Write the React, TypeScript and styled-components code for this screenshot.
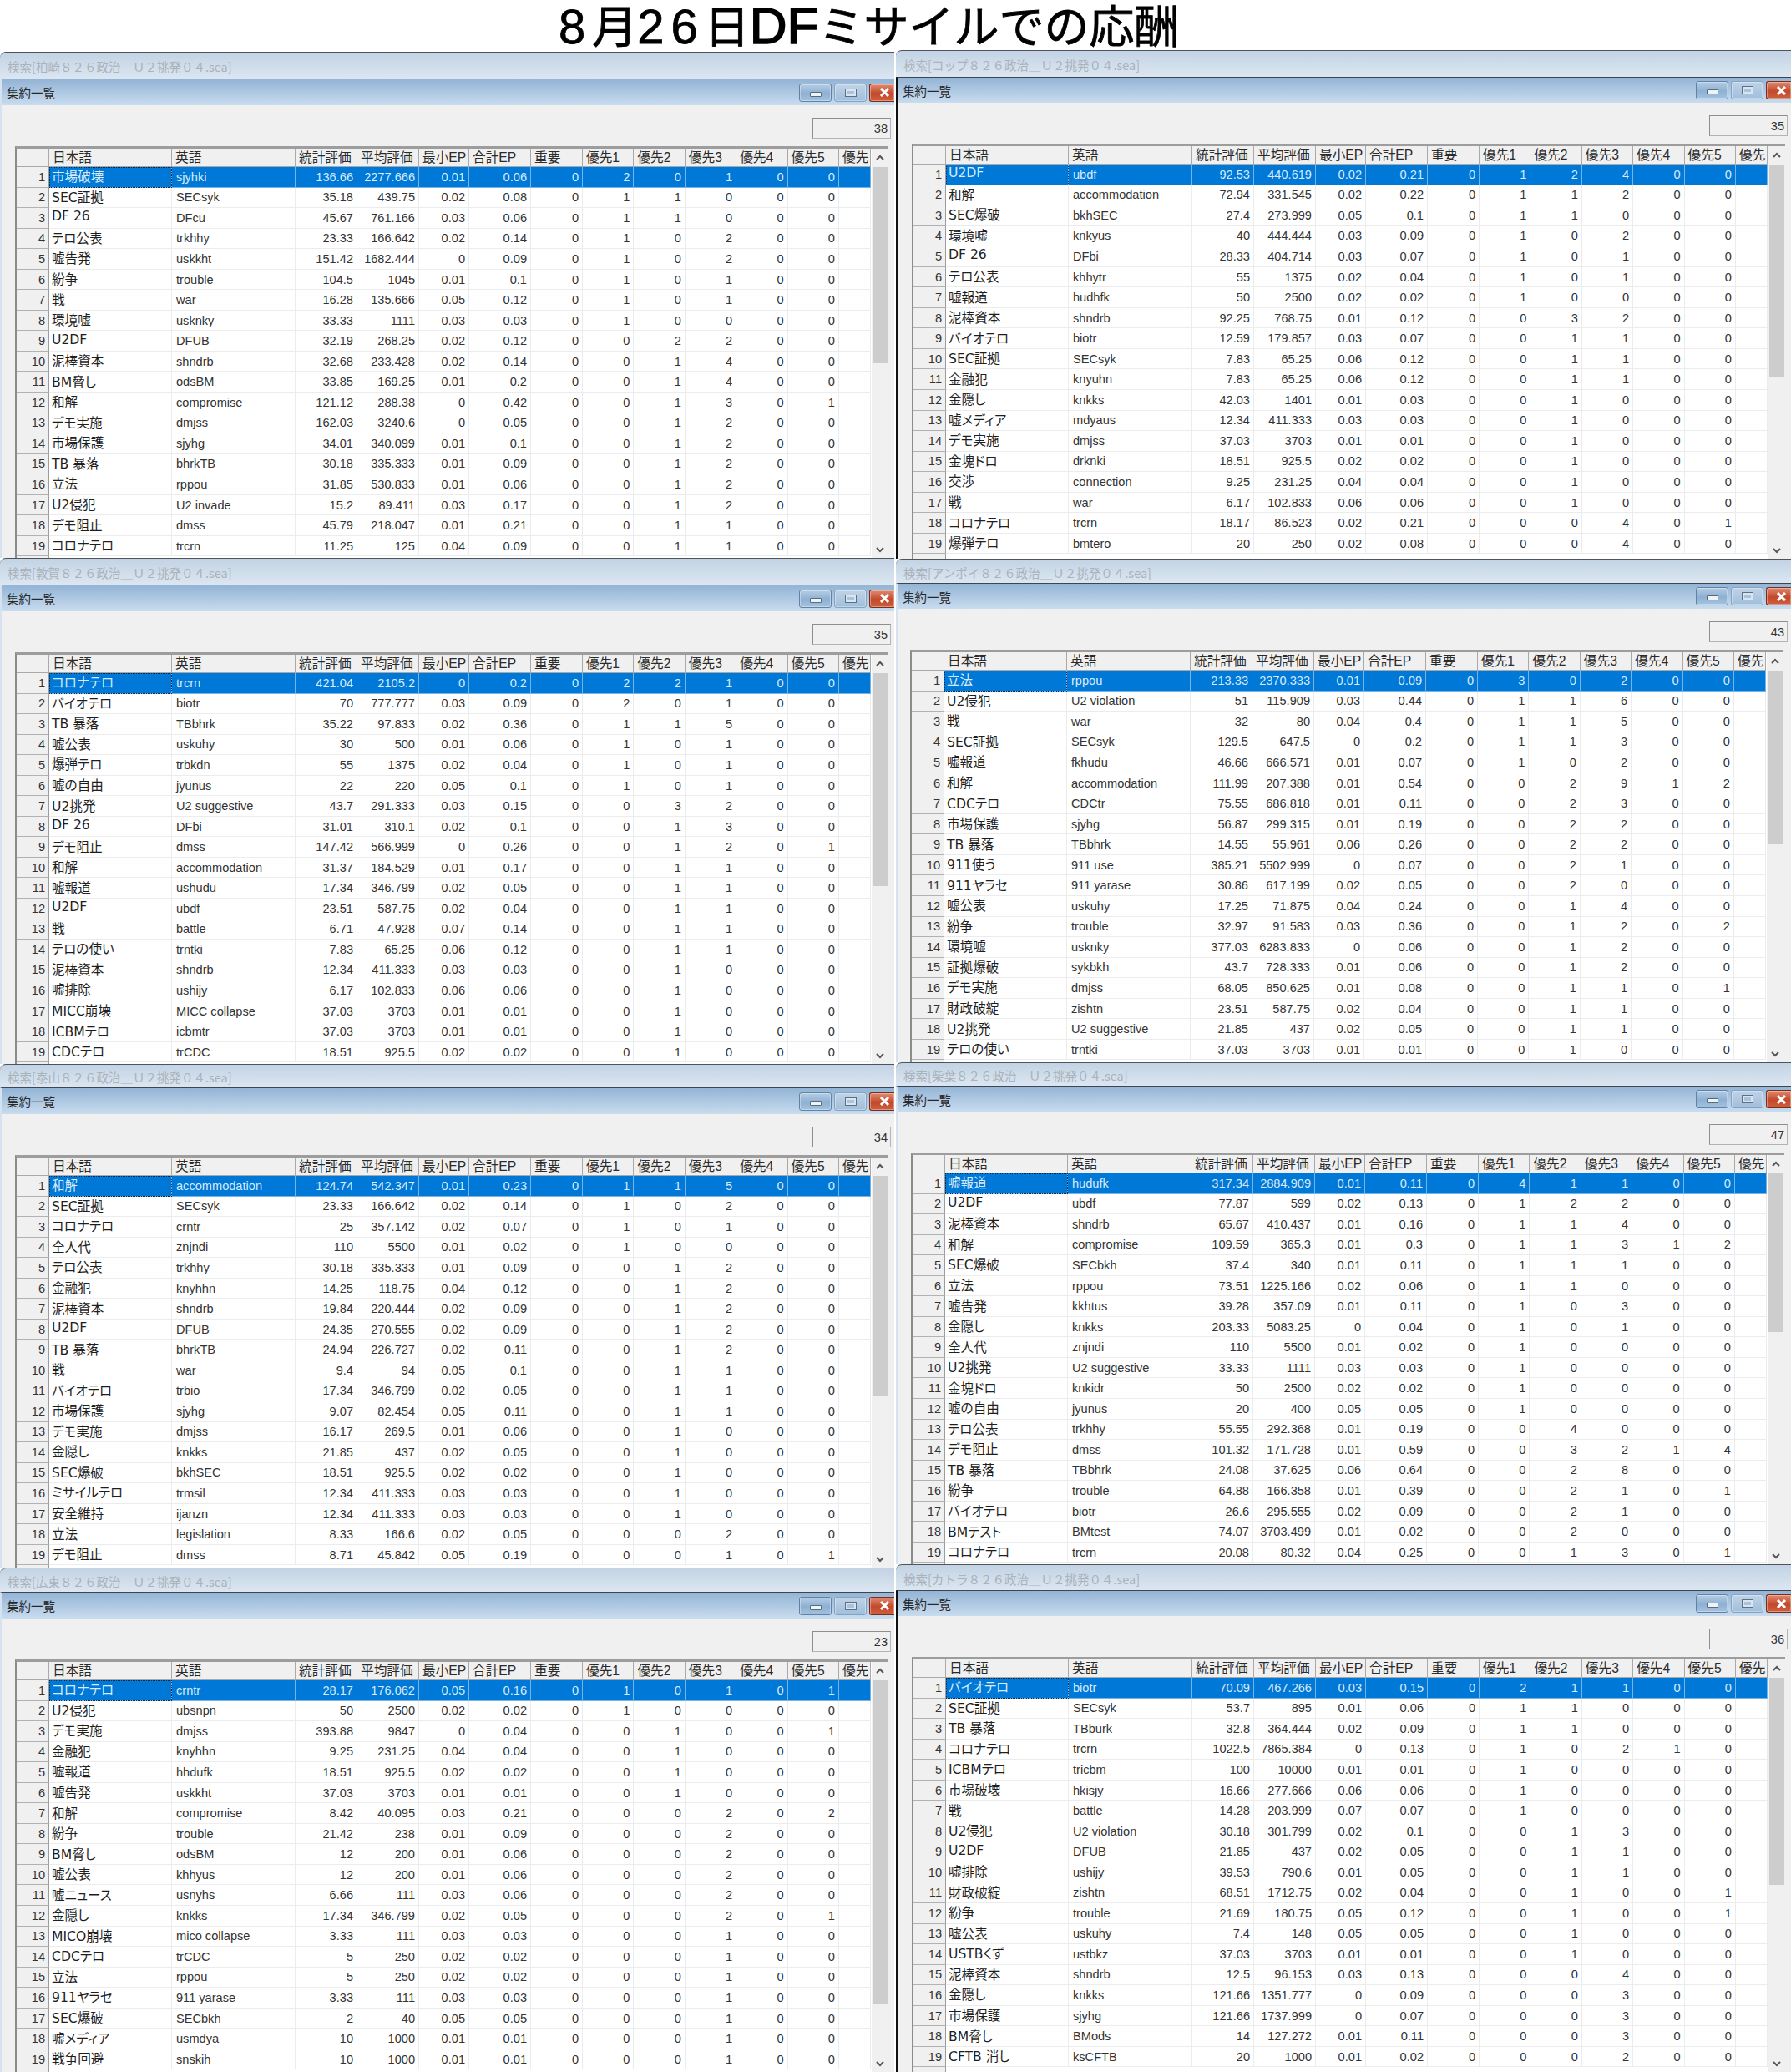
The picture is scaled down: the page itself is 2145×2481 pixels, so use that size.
import React from 'react';
import styled, { createGlobalStyle, css } from 'styled-components';

const COLS = '39px 147px 148px 74px 74px 60px 74px 62px repeat(5, 61.4px) 38px';
const JP = '"Noto Sans CJK JP", sans-serif';
const MIX = '"Liberation Sans", "Noto Sans CJK JP", sans-serif';
const HEADS = ['', '日本語', '英語', '統計評価', '平均評価', '最小EP', '合計EP', '重要', '優先1', '優先2', '優先3', '優先4', '優先5', '優先'];

type Panel = {
  place: string;
  count: number;
  outer: number;
  height: number;
  inset: number;
  bar: number;
  dark?: boolean;
  rows: string[];
};

const left: Panel[] = [
  {
    place: '柏崎', count: 38, outer: 32, height: 606, inset: 18, bar: 31,
    rows: [
      '市場破壊|sjyhki|136.66|2277.666|0.01|0.06|0|2|0|1|0|0',
      'SEC証拠|SECsyk|35.18|439.75|0.02|0.08|0|1|1|0|0|0',
      'DF 26|DFcu|45.67|761.166|0.03|0.06|0|1|1|0|0|0',
      'テロ公表|trkhhy|23.33|166.642|0.02|0.14|0|1|0|2|0|0',
      '嘘告発|uskkht|151.42|1682.444|0|0.09|0|1|0|2|0|0',
      '紛争|trouble|104.5|1045|0.01|0.1|0|1|0|1|0|0',
      '戦|war|16.28|135.666|0.05|0.12|0|1|0|1|0|0',
      '環境嘘|usknky|33.33|1111|0.03|0.03|0|1|0|0|0|0',
      'U2DF|DFUB|32.19|268.25|0.02|0.12|0|0|2|2|0|0',
      '泥棒資本|shndrb|32.68|233.428|0.02|0.14|0|0|1|4|0|0',
      'BM脅し|odsBM|33.85|169.25|0.01|0.2|0|0|1|4|0|0',
      '和解|compromise|121.12|288.38|0|0.42|0|0|1|3|0|1',
      'デモ実施|dmjss|162.03|3240.6|0|0.05|0|0|1|2|0|0',
      '市場保護|sjyhg|34.01|340.099|0.01|0.1|0|0|1|2|0|0',
      'TB 暴落|bhrkTB|30.18|335.333|0.01|0.09|0|0|1|2|0|0',
      '立法|rppou|31.85|530.833|0.01|0.06|0|0|1|2|0|0',
      'U2侵犯|U2 invade|15.2|89.411|0.03|0.17|0|0|1|2|0|0',
      'デモ阻止|dmss|45.79|218.047|0.01|0.21|0|0|1|1|0|0',
      'コロナテロ|trcrn|11.25|125|0.04|0.09|0|0|1|1|0|0',
    ],
  },
  {
    place: '敦賀', count: 35, outer: 32, height: 606, inset: 18, bar: 31,
    rows: [
      'コロナテロ|trcrn|421.04|2105.2|0|0.2|0|2|2|1|0|0',
      'バイオテロ|biotr|70|777.777|0.03|0.09|0|2|0|1|0|0',
      'TB 暴落|TBbhrk|35.22|97.833|0.02|0.36|0|1|1|5|0|0',
      '嘘公表|uskuhy|30|500|0.01|0.06|0|1|0|1|0|0',
      '爆弾テロ|trbkdn|55|1375|0.02|0.04|0|1|0|1|0|0',
      '嘘の自由|jyunus|22|220|0.05|0.1|0|1|0|1|0|0',
      'U2挑発|U2 suggestive|43.7|291.333|0.03|0.15|0|0|3|2|0|0',
      'DF 26|DFbi|31.01|310.1|0.02|0.1|0|0|1|3|0|0',
      'デモ阻止|dmss|147.42|566.999|0|0.26|0|0|1|2|0|1',
      '和解|accommodation|31.37|184.529|0.01|0.17|0|0|1|1|0|0',
      '嘘報道|ushudu|17.34|346.799|0.02|0.05|0|0|1|1|0|0',
      'U2DF|ubdf|23.51|587.75|0.02|0.04|0|0|1|1|0|0',
      '戦|battle|6.71|47.928|0.07|0.14|0|0|1|1|0|0',
      'テロの使い|trntki|7.83|65.25|0.06|0.12|0|0|1|1|0|0',
      '泥棒資本|shndrb|12.34|411.333|0.03|0.03|0|0|1|0|0|0',
      '嘘排除|ushijy|6.17|102.833|0.06|0.06|0|0|1|0|0|0',
      'MICC崩壊|MICC collapse|37.03|3703|0.01|0.01|0|0|1|0|0|0',
      'ICBMテロ|icbmtr|37.03|3703|0.01|0.01|0|0|1|0|0|0',
      'CDCテロ|trCDC|18.51|925.5|0.02|0.02|0|0|1|0|0|0',
    ],
  },
  {
    place: '泰山', count: 34, outer: 28, height: 603, inset: 18, bar: 31,
    rows: [
      '和解|accommodation|124.74|542.347|0.01|0.23|0|1|1|5|0|0',
      'SEC証拠|SECsyk|23.33|166.642|0.02|0.14|0|1|0|2|0|0',
      'コロナテロ|crntr|25|357.142|0.02|0.07|0|1|0|1|0|0',
      '全人代|znjndi|110|5500|0.01|0.02|0|1|0|0|0|0',
      'テロ公表|trkhhy|30.18|335.333|0.01|0.09|0|0|1|2|0|0',
      '金融犯|knyhhn|14.25|118.75|0.04|0.12|0|0|1|2|0|0',
      '泥棒資本|shndrb|19.84|220.444|0.02|0.09|0|0|1|2|0|0',
      'U2DF|DFUB|24.35|270.555|0.02|0.09|0|0|1|2|0|0',
      'TB 暴落|bhrkTB|24.94|226.727|0.02|0.11|0|0|1|2|0|0',
      '戦|war|9.4|94|0.05|0.1|0|0|1|1|0|0',
      'バイオテロ|trbio|17.34|346.799|0.02|0.05|0|0|1|1|0|0',
      '市場保護|sjyhg|9.07|82.454|0.05|0.11|0|0|1|1|0|0',
      'デモ実施|dmjss|16.17|269.5|0.01|0.06|0|0|1|0|0|0',
      '金隠し|knkks|21.85|437|0.02|0.05|0|0|1|0|0|0',
      'SEC爆破|bkhSEC|18.51|925.5|0.02|0.02|0|0|1|0|0|0',
      'ミサイルテロ|trmsil|12.34|411.333|0.03|0.03|0|0|1|0|0|0',
      '安全維持|ijanzn|12.34|411.333|0.03|0.03|0|0|1|0|0|0',
      '立法|legislation|8.33|166.6|0.02|0.05|0|0|0|2|0|0',
      'デモ阻止|dmss|8.71|45.842|0.05|0.19|0|0|0|1|0|1',
    ],
  },
  {
    place: '広東', count: 23, outer: 29, height: 604, inset: 18, bar: 31,
    rows: [
      'コロナテロ|crntr|28.17|176.062|0.05|0.16|0|1|0|1|0|1',
      'U2侵犯|ubsnpn|50|2500|0.02|0.02|0|1|0|0|0|0',
      'デモ実施|dmjss|393.88|9847|0|0.04|0|0|1|0|0|1',
      '金融犯|knyhhn|9.25|231.25|0.04|0.04|0|0|1|0|0|0',
      '嘘報道|hhdufk|18.51|925.5|0.02|0.02|0|0|1|0|0|0',
      '嘘告発|uskkht|37.03|3703|0.01|0.01|0|0|1|0|0|0',
      '和解|compromise|8.42|40.095|0.03|0.21|0|0|0|2|0|2',
      '紛争|trouble|21.42|238|0.01|0.09|0|0|0|2|0|0',
      'BM脅し|odsBM|12|200|0.01|0.06|0|0|0|2|0|0',
      '嘘公表|khhyus|12|200|0.01|0.06|0|0|0|2|0|0',
      '嘘ニュース|usnyhs|6.66|111|0.03|0.06|0|0|0|2|0|0',
      '金隠し|knkks|17.34|346.799|0.02|0.05|0|0|0|2|0|1',
      'MICO崩壊|mico collapse|3.33|111|0.03|0.03|0|0|0|1|0|0',
      'CDCテロ|trCDC|5|250|0.02|0.02|0|0|0|1|0|0',
      '立法|rppou|5|250|0.02|0.02|0|0|0|1|0|0',
      '911ヤラセ|911 yarase|3.33|111|0.03|0.03|0|0|0|1|0|0',
      'SEC爆破|SECbkh|2|40|0.05|0.05|0|0|0|1|0|0',
      '嘘メディア|usmdya|10|1000|0.01|0.01|0|0|0|1|0|0',
      '戦争回避|snskih|10|1000|0.01|0.01|0|0|0|1|0|0',
    ],
  },
];

const right: Panel[] = [
  {
    place: 'コップ', count: 35, outer: 32, height: 609, inset: 19, bar: 30, dark: true,
    rows: [
      'U2DF|ubdf|92.53|440.619|0.02|0.21|0|1|2|4|0|0',
      '和解|accommodation|72.94|331.545|0.02|0.22|0|1|1|2|0|0',
      'SEC爆破|bkhSEC|27.4|273.999|0.05|0.1|0|1|1|0|0|0',
      '環境嘘|knkyus|40|444.444|0.03|0.09|0|1|0|2|0|0',
      'DF 26|DFbi|28.33|404.714|0.03|0.07|0|1|0|1|0|0',
      'テロ公表|khhytr|55|1375|0.02|0.04|0|1|0|1|0|0',
      '嘘報道|hudhfk|50|2500|0.02|0.02|0|1|0|0|0|0',
      '泥棒資本|shndrb|92.25|768.75|0.01|0.12|0|0|3|2|0|0',
      'バイオテロ|biotr|12.59|179.857|0.03|0.07|0|0|1|1|0|0',
      'SEC証拠|SECsyk|7.83|65.25|0.06|0.12|0|0|1|1|0|0',
      '金融犯|knyuhn|7.83|65.25|0.06|0.12|0|0|1|1|0|0',
      '金隠し|knkks|42.03|1401|0.01|0.03|0|0|1|0|0|0',
      '嘘メディア|mdyaus|12.34|411.333|0.03|0.03|0|0|1|0|0|0',
      'デモ実施|dmjss|37.03|3703|0.01|0.01|0|0|1|0|0|0',
      '金塊ドロ|drknki|18.51|925.5|0.02|0.02|0|0|1|0|0|0',
      '交渉|connection|9.25|231.25|0.04|0.04|0|0|1|0|0|0',
      '戦|war|6.17|102.833|0.06|0.06|0|0|1|0|0|0',
      'コロナテロ|trcrn|18.17|86.523|0.02|0.21|0|0|0|4|0|1',
      '爆弾テロ|bmtero|20|250|0.02|0.08|0|0|0|4|0|0',
    ],
  },
  {
    place: 'アンポイ', count: 43, outer: 29, height: 603, inset: 17, bar: 30,
    rows: [
      '立法|rppou|213.33|2370.333|0.01|0.09|0|3|0|2|0|0',
      'U2侵犯|U2 violation|51|115.909|0.03|0.44|0|1|1|6|0|0',
      '戦|war|32|80|0.04|0.4|0|1|1|5|0|0',
      'SEC証拠|SECsyk|129.5|647.5|0|0.2|0|1|1|3|0|0',
      '嘘報道|fkhudu|46.66|666.571|0.01|0.07|0|1|0|2|0|0',
      '和解|accommodation|111.99|207.388|0.01|0.54|0|0|2|9|1|2',
      'CDCテロ|CDCtr|75.55|686.818|0.01|0.11|0|0|2|3|0|0',
      '市場保護|sjyhg|56.87|299.315|0.01|0.19|0|0|2|2|0|0',
      'TB 暴落|TBbhrk|14.55|55.961|0.06|0.26|0|0|2|2|0|0',
      '911使う|911 use|385.21|5502.999|0|0.07|0|0|2|1|0|0',
      '911ヤラセ|911 yarase|30.86|617.199|0.02|0.05|0|0|2|0|0|0',
      '嘘公表|uskuhy|17.25|71.875|0.04|0.24|0|0|1|4|0|0',
      '紛争|trouble|32.97|91.583|0.03|0.36|0|0|1|2|0|2',
      '環境嘘|usknky|377.03|6283.833|0|0.06|0|0|1|2|0|0',
      '証拠爆破|sykbkh|43.7|728.333|0.01|0.06|0|0|1|2|0|0',
      'デモ実施|dmjss|68.05|850.625|0.01|0.08|0|0|1|1|0|1',
      '財政破綻|zishtn|23.51|587.75|0.02|0.04|0|0|1|1|0|0',
      'U2挑発|U2 suggestive|21.85|437|0.02|0.05|0|0|1|1|0|0',
      'テロの使い|trntki|37.03|3703|0.01|0.01|0|0|1|0|0|0',
    ],
  },
  {
    place: '柴葉', count: 47, outer: 28, height: 601, inset: 18, bar: 30,
    rows: [
      '嘘報道|hudufk|317.34|2884.909|0.01|0.11|0|4|1|1|0|0',
      'U2DF|ubdf|77.87|599|0.02|0.13|0|1|2|2|0|0',
      '泥棒資本|shndrb|65.67|410.437|0.01|0.16|0|1|1|4|0|0',
      '和解|compromise|109.59|365.3|0.01|0.3|0|1|1|3|1|2',
      'SEC爆破|SECbkh|37.4|340|0.01|0.11|0|1|1|1|0|0',
      '立法|rppou|73.51|1225.166|0.02|0.06|0|1|1|0|0|0',
      '嘘告発|kkhtus|39.28|357.09|0.01|0.11|0|1|0|3|0|0',
      '金隠し|knkks|203.33|5083.25|0|0.04|0|1|0|1|0|0',
      '全人代|znjndi|110|5500|0.01|0.02|0|1|0|0|0|0',
      'U2挑発|U2 suggestive|33.33|1111|0.03|0.03|0|1|0|0|0|0',
      '金塊ドロ|knkidr|50|2500|0.02|0.02|0|1|0|0|0|0',
      '嘘の自由|jyunus|20|400|0.05|0.05|0|1|0|0|0|0',
      'テロ公表|trkhhy|55.55|292.368|0.01|0.19|0|0|4|0|0|0',
      'デモ阻止|dmss|101.32|171.728|0.01|0.59|0|0|3|2|1|4',
      'TB 暴落|TBbhrk|24.08|37.625|0.06|0.64|0|0|2|8|0|0',
      '紛争|trouble|64.88|166.358|0.01|0.39|0|0|2|1|0|1',
      'バイオテロ|biotr|26.6|295.555|0.02|0.09|0|0|2|1|0|0',
      'BMテスト|BMtest|74.07|3703.499|0.01|0.02|0|0|2|0|0|0',
      'コロナテロ|trcrn|20.08|80.32|0.04|0.25|0|0|1|3|0|1',
    ],
  },
  {
    place: 'カトラ', count: 36, outer: 31, height: 608, inset: 19, bar: 30, dark: true,
    rows: [
      'バイオテロ|biotr|70.09|467.266|0.03|0.15|0|2|1|1|0|0',
      'SEC証拠|SECsyk|53.7|895|0.01|0.06|0|1|1|0|0|0',
      'TB 暴落|TBburk|32.8|364.444|0.02|0.09|0|1|1|0|0|0',
      'コロナテロ|trcrn|1022.5|7865.384|0|0.13|0|1|0|2|1|0',
      'ICBMテロ|tricbm|100|10000|0.01|0.01|0|1|0|0|0|0',
      '市場破壊|hkisjy|16.66|277.666|0.06|0.06|0|1|0|0|0|0',
      '戦|battle|14.28|203.999|0.07|0.07|0|1|0|0|0|0',
      'U2侵犯|U2 violation|30.18|301.799|0.02|0.1|0|0|1|3|0|0',
      'U2DF|DFUB|21.85|437|0.02|0.05|0|0|1|1|0|0',
      '嘘排除|ushijy|39.53|790.6|0.01|0.05|0|0|1|1|0|0',
      '財政破綻|zishtn|68.51|1712.75|0.02|0.04|0|0|1|0|0|1',
      '紛争|trouble|21.69|180.75|0.05|0.12|0|0|1|0|0|1',
      '嘘公表|uskuhy|7.4|148|0.05|0.05|0|0|1|0|0|0',
      'USTBくず|ustbkz|37.03|3703|0.01|0.01|0|0|1|0|0|0',
      '泥棒資本|shndrb|12.5|96.153|0.03|0.13|0|0|0|4|0|0',
      '金隠し|knkks|121.66|1351.777|0|0.09|0|0|0|3|0|0',
      '市場保護|sjyhg|121.66|1737.999|0|0.07|0|0|0|3|0|0',
      'BM脅し|BMods|14|127.272|0.01|0.11|0|0|0|3|0|0',
      'CFTB 消し|ksCFTB|20|1000|0.01|0.02|0|0|0|2|0|0',
    ],
  },
];

const Global = createGlobalStyle`
  html, body {
    margin: 0;
    background: #fff;
    overflow: hidden;
  }
`;

const Page = styled.div`
  width: 2145px;
  height: 2481px;
  overflow: hidden;
  display: flex;
  flex-direction: column;
`;

const Heading = styled.h1`
  margin: 0;
  height: 60px;
  flex: none;
  padding-left: 669px;
  font: 400 54px/58px ${JP};
  -webkit-text-stroke: 0.8px #000;
  color: #000;
  white-space: nowrap;
`;

const Digit = styled.span`
  font-family: "Liberation Sans", sans-serif;
  font-size: 58px;
  letter-spacing: 8px;
`;

const Latin = styled.span`
  font-family: "Liberation Sans", sans-serif;
  font-size: 62px;
  -webkit-text-stroke: 1.6px #000;
`;

const Columns = styled.div`
  display: grid;
  grid-template-columns: 1071px 1072px;
  column-gap: 2px;
`;

const Stack = styled.div<{ $top: number }>`
  display: flex;
  flex-direction: column;
  margin-top: ${(p) => p.$top}px;
`;

const Win = styled.section<{ $height: number }>`
  height: ${(p) => p.$height}px;
  display: flex;
  flex-direction: column;
  overflow: hidden;
`;

const ParentBar = styled.div<{ $height: number }>`
  height: ${(p) => p.$height}px;
  flex: none;
  box-sizing: border-box;
  padding: 2px 0 0 9px;
  display: flex;
  align-items: center;
  border-top: 1px solid #4d545c;
  border-top-left-radius: 7px;
  background: linear-gradient(#c3d3e4, #dbe6f1);
  font: 14.5px ${JP};
  color: #aab2ba;
  white-space: nowrap;
`;

const Child = styled.div<{ $dark?: boolean }>`
  flex: 1;
  min-height: 0;
  display: flex;
  flex-direction: column;
  border-top: 1px solid #3e454d;
  border-left: 2px solid ${(p) => (p.$dark ? '#101010' : '#d5e2ef')};
  background: #f0f0f0;
`;

const ChildBar = styled.div<{ $height: number }>`
  height: ${(p) => p.$height}px;
  flex: none;
  display: flex;
  align-items: center;
  justify-content: space-between;
  padding-left: 6px;
  background: linear-gradient(#93b4d5, #c9dcef);
  font: 14.5px ${JP};
  color: #26282b;
`;

const BarButtons = styled.div`
  display: flex;
  gap: 3px;
`;

const Btn = styled.button`
  width: 39px;
  height: 22px;
  padding: 0;
  display: flex;
  align-items: center;
  justify-content: center;
  box-sizing: border-box;
  border-radius: 3px;
  border: 1px solid #5f83a8;
  background: linear-gradient(#b5cce3, #8db0d2 55%, #a4c2df);
  box-shadow: inset 0 0 0 1px rgba(255, 255, 255, 0.35);
`;

const RestoreBtn = styled(Btn)`
  border-color: #84a3c3;
  background: linear-gradient(#c0d3e7, #a0bedb);
`;

const CloseBtn = styled(Btn)`
  width: 30px;
  justify-content: flex-start;
  padding-left: 11px;
  border-color: #7b2d1b;
  border-right: none;
  border-radius: 3px 0 0 3px;
  background: linear-gradient(#e08a72, #c2492b 55%, #cf5f3e);
`;

const MinGlyph = styled.span`
  width: 14px;
  height: 6px;
  margin-top: 4px;
  box-sizing: border-box;
  background: #eef3f8;
  border: 1px solid #566a80;
  border-radius: 1px;
`;

const MaxGlyph = styled.span`
  width: 14px;
  height: 10px;
  box-sizing: border-box;
  background: #a9c3dc;
  border: 1px solid #5b6f85;
  box-shadow: inset 0 0 0 2px #d9e5f0;
`;

const Toolbar = styled.div`
  height: 49px;
  flex: none;
  display: flex;
  justify-content: flex-end;
  align-items: flex-start;
  padding: 15px 4px 0 0;
  box-sizing: border-box;
`;

const CountBox = styled.div`
  width: 94px;
  height: 25px;
  box-sizing: border-box;
  padding-right: 3px;
  border: 1px solid #8e8e8e;
  border-bottom-color: #b4b4b4;
  border-right-color: #b4b4b4;
  font: 14.6px/24px "Liberation Sans", sans-serif;
  color: #333;
  text-align: right;
`;

const TableBox = styled.div<{ $inset: number }>`
  flex: 1;
  min-height: 0;
  align-self: flex-start;
  height: 100%;
  display: flex;
  overflow: hidden;
  margin-left: ${(p) => p.$inset - 2}px;
  border-top: 3px solid #9d9d9d;
  border-left: 2px solid #8c8c8c;
`;

const Grid = styled.div`
  width: 1024px;
  flex: none;
  background: #fff;
`;

const Row = styled.div<{ $head?: boolean }>`
  display: grid;
  grid-template-columns: ${COLS};
  height: ${(p) => (p.$head ? '22px' : '24.55px')};
`;

const cellBase = css`
  box-sizing: border-box;
  overflow: hidden;
  white-space: nowrap;
  display: flex;
  align-items: center;
`;

const HeadCell = styled.div`
  ${cellBase}
  padding: 0 0 3px 4px;
  background: #f0f0f0;
  border-right: 1px solid #a9a9a9;
  border-bottom: 1px solid #a9a9a9;
  font: 15.7px ${MIX};
  color: #2b2b2b;
`;

const RowNum = styled.div`
  ${cellBase}
  justify-content: flex-end;
  padding-right: 4px;
  background: #f0f0f0;
  border-right: 1px solid #9c9c9c;
  border-bottom: 1px solid #b2b2b2;
  font: 14.6px "Liberation Sans", sans-serif;
  color: #333;
`;

const bodyCell = css<{ $sel?: boolean }>`
  ${cellBase}
  background: ${(p) => (p.$sel ? '#0078d7' : '#fff')};
  color: ${(p) => (p.$sel ? '#d8ebfa' : '#333')};
  border-right: 1px solid ${(p) => (p.$sel ? '#74b4e6' : '#ececec')};
  border-bottom: 1px solid ${(p) => (p.$sel ? '#74b4e6' : '#ececec')};
`;

const JpCell = styled.div<{ $sel?: boolean }>`
  ${bodyCell}
  padding: 0 0 3px 3px;
  font: 15.6px "DejaVu Sans", "Noto Sans CJK JP", sans-serif;
  font-feature-settings: "palt";
  color: ${(p) => (p.$sel ? '#d8ebfa' : '#1e1e1e')};
  ${(p) => p.$sel && 'outline: 1px dotted #0b2a44; outline-offset: -1px;'}
`;

const EnCell = styled.div<{ $sel?: boolean }>`
  ${bodyCell}
  padding-left: 5px;
  font: 14.6px "Liberation Sans", sans-serif;
`;

const NumCell = styled(EnCell)`
  justify-content: flex-end;
  padding: 0 4px 0 0;
`;

const Scroll = styled.div`
  width: 20px;
  flex: none;
  display: flex;
  flex-direction: column;
  background: #f0f0f0;
`;

const ArrowBox = styled.div<{ $height: number }>`
  height: ${(p) => p.$height}px;
  flex: none;
  display: flex;
  align-items: center;
  justify-content: center;
`;

const Track = styled.div`
  flex: 1;
  min-height: 0;
  overflow: hidden;
`;

const Thumb = styled.div`
  width: 18px;
  margin-left: 1px;
  background: #cdcdcd;
`;

const Chevron = ({ up }: { up?: boolean }): JSX.Element => (
  <svg width="10" height="8" viewBox="0 0 10 8">
    <path
      d={up ? 'M1 6 L5 2 L9 6' : 'M1 2 L5 6 L9 2'}
      fill="none"
      stroke="#555"
      strokeWidth="2"
    />
  </svg>
);

const Xmark = (): JSX.Element => (
  <svg width="13" height="11" viewBox="0 0 13 11">
    <path d="M2 1 L11 10 M11 1 L2 10" stroke="#fff" strokeWidth="3" />
  </svg>
);

const SummaryWindow = ({ panel }: { panel: Panel }): JSX.Element => {
  const { place, count, outer, height, inset, bar, dark, rows } = panel;
  // same proportion the real scrollbar uses: 19 visible of `count`
  const thumbHeight = Math.round((470 * 19) / count);

  return (
    <Win $height={height}>
      <ParentBar $height={outer}>
        {`検索[${place}８２６政治＿Ｕ２挑発０４.sea]`}
      </ParentBar>
      <Child $dark={dark}>
        <ChildBar $height={bar}>
          <span>集約一覧</span>
          <BarButtons>
            <Btn><MinGlyph /></Btn>
            <RestoreBtn><MaxGlyph /></RestoreBtn>
            <CloseBtn><Xmark /></CloseBtn>
          </BarButtons>
        </ChildBar>
        <Toolbar>
          <CountBox>{count}</CountBox>
        </Toolbar>
        <TableBox $inset={inset}>
          <Grid>
            <Row $head>
              {HEADS.map((h, i) => <HeadCell key={i}>{h}</HeadCell>)}
            </Row>
            {rows.map((line, i) => {
              const [jp, en, ...nums] = line.split('|');
              const sel = i === 0;
              return (
                <Row key={i}>
                  <RowNum>{i + 1}</RowNum>
                  <JpCell $sel={sel}>{jp}</JpCell>
                  <EnCell $sel={sel}>{en}</EnCell>
                  {nums.map((n, j) => <NumCell key={j} $sel={sel}>{n}</NumCell>)}
                  <NumCell $sel={sel} />
                </Row>
              );
            })}
            <Row>
              <RowNum />
            </Row>
          </Grid>
          <Scroll>
            <ArrowBox $height={22}><Chevron up /></ArrowBox>
            <Track>
              <Thumb style={{ height: thumbHeight }} />
            </Track>
            <ArrowBox $height={21}><Chevron /></ArrowBox>
          </Scroll>
        </TableBox>
      </Child>
    </Win>
  );
};

export default function App(): JSX.Element {
  return (
    <Page>
      <Global />
      <Heading>
        <Digit>8</Digit>
        月
        <Digit>26</Digit>
        日
        <Latin>DF</Latin>
        ミサイルでの応酬
      </Heading>
      <Columns>
        <Stack $top={2}>
          {left.map((p) => <SummaryWindow key={p.place} panel={p} />)}
        </Stack>
        <Stack $top={0}>
          {right.map((p) => <SummaryWindow key={p.place} panel={p} />)}
        </Stack>
      </Columns>
    </Page>
  );
}
